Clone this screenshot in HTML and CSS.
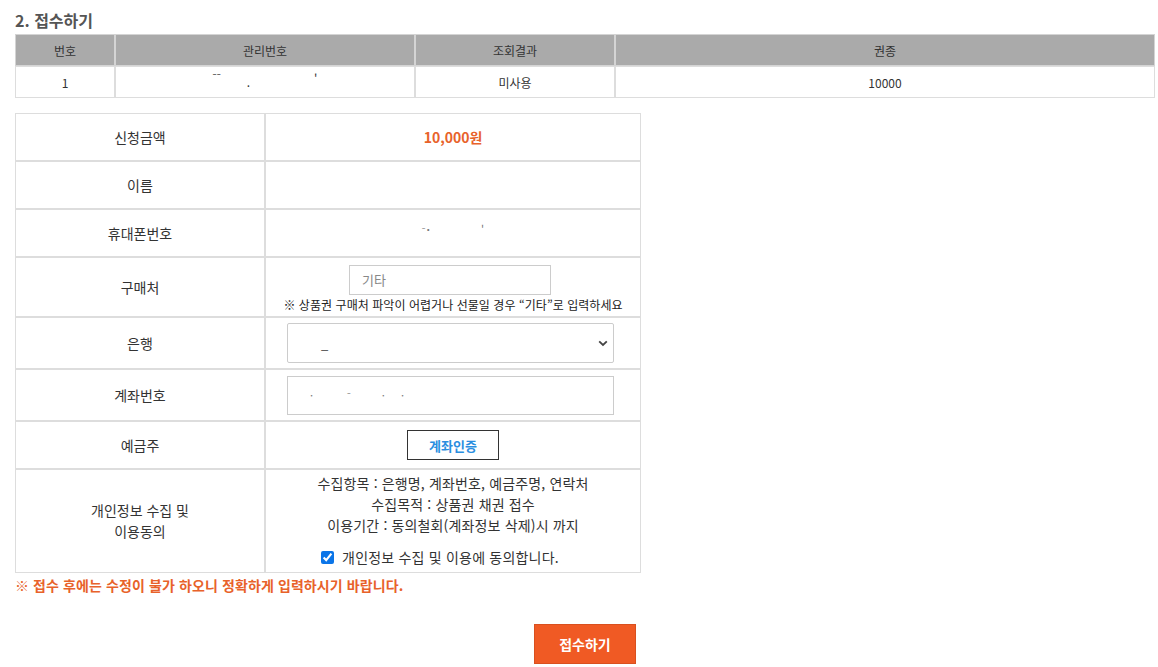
FILE: index.html
```html
<!DOCTYPE html>
<html lang="ko">
<head>
<meta charset="utf-8">
<title>접수하기</title>
<link rel="stylesheet" href="styles.css">
</head>
<body>
<div class="wrap">
  <h2 class="title">2. 접수하기</h2>
  <table class="list">
    <colgroup>
      <col class="c1"><col class="c2"><col class="c3"><col class="c4">
    </colgroup>
    <thead>
      <tr><th>번호</th><th>관리번호</th><th>조회결과</th><th>권종</th></tr>
    </thead>
    <tbody>
      <tr><td>1</td><td class="masked"><span class="m1">⁻⁻</span><span class="m2">.</span><span class="m3">'</span></td><td>미사용</td><td>10000</td></tr>
    </tbody>
  </table>

  <table class="form">
    <colgroup><col class="lab"><col class="val"></colgroup>
    <tbody>
      <tr class="h48"><td class="label">신청금액</td><td class="price">10,000원</td></tr>
      <tr class="h48"><td class="label">이름</td><td></td></tr>
      <tr class="h48"><td class="label">휴대폰번호</td><td class="masked"><span class="p1">⁻˙</span><span class="p2">'</span></td></tr>
      <tr class="h60"><td class="label">구매처</td><td>
        <div class="shop"><input class="shop-input" type="text" placeholder="기타"></div>
        <p class="note">※ 상품권 구매처 파악이 어렵거나 선물일 경우 “기타”로 입력하세요</p>
      </td></tr>
      <tr class="h52"><td class="label">은행</td><td>
        <div class="select"><span class="sel-val">_</span>
          <svg class="chev" width="10" height="7" viewBox="0 0 10 7"><path d="M1.2 1.3 L5 5 L8.8 1.3" fill="none" stroke="#444" stroke-width="1.8"/></svg>
        </div>
      </td></tr>
      <tr class="h52"><td class="label">계좌번호</td><td>
        <div class="acct"><span class="a1">·</span><span class="a2">⁻</span><span class="a3">·</span><span class="a4">·</span></div>
      </td></tr>
      <tr class="h48"><td class="label">예금주</td><td><button class="verify" type="button">계좌인증</button></td></tr>
      <tr class="h104"><td class="label">개인정보 수집 및<br>이용동의</td><td class="privacy">
        <p>수집항목 : 은행명, 계좌번호, 예금주명, 연락처</p>
        <p>수집목적 : 상품권 채권 접수</p>
        <p>이용기간 : 동의철회(계좌정보 삭제)시 까지</p>
        <label class="agree"><input type="checkbox" checked> 개인정보 수집 및 이용에 동의합니다.</label>
      </td></tr>
    </tbody>
  </table>
  <p class="warn">※ 접수 후에는 수정이 불가 하오니 정확하게 입력하시기 바랍니다.</p>
  <div class="submit-row"><button class="submit" type="button">접수하기</button></div>
</div>
</body>
</html>
```
FILE: styles.css
```css
* { box-sizing: border-box; }
html, body { margin: 0; padding: 0; background: #fff; }
body {
  font-family: "Noto Sans CJK KR", "Noto Sans", sans-serif;
  color: #333;
  font-size: 14px;
}
.wrap { padding: 8px 3px 0 15px; width: 1158px; }
.title {
  margin: 0;
  height: 26px;
  font-size: 16px;
  line-height: 24px;
  font-weight: 700;
  color: #555;
}
table { border-collapse: separate; border-spacing: 0; table-layout: fixed; }
.list { width: 1140px; }
.list .c1 { width: 100px; }
.list .c2 { width: 300px; }
.list .c3 { width: 200px; }
.list .c4 { width: 540px; }
.list th, .list td {
  border: 1px solid #ddd;
  height: 32px;
  padding: 0;
  text-align: center;
  vertical-align: middle;
  font-size: 12px;
  font-weight: 400;
  color: #333;
}
.list th { background: #aaa; border-color: #d4d4d4; color: #333; }
.masked { color: #777; font-size: 11px; }
.m1 { margin-right: 26px; position: relative; top: -5px; }
.m2 { margin-right: 64px; }
.m3 { position: relative; top: -4px; }

.form { width: 626px; margin-top: 15px; }
.form .lab { width: 250px; }
.form .val { width: 376px; }
.form td {
  border: 1px solid #ddd;
  padding: 0;
  text-align: center;
  vertical-align: middle;
}
.h48 td { height: 48px; }
.h60 td { height: 60px; }
.h52 td { height: 52px; }
.h104 td { height: 104px; }
.label { font-size: 14px; color: #333; line-height: 21px; }
.price { color: #e8622a; font-weight: 700; font-size: 14px; }
.p1 { margin-right: 50px; position: relative; top: -3px; }
.p2 { position: relative; top: -5px; }

.shop { display: flex; justify-content: center; padding-right: 6px; }
.shop-input {
  width: 202px; height: 30px;
  border: 1px solid #ccc;
  padding: 0 12px;
  font: inherit; font-size: 13px;
  margin: 5px 0 0 0;
}
.shop-input::placeholder { color: #888; }
.note { margin: 0; font-size: 12px; line-height: 20px; color: #222; letter-spacing: 0.05px; }

.select {
  position: relative;
  margin: 0 0 0 21px;
  width: 327px; height: 40px;
  border: 1px solid #ccc;
  border-radius: 2px;
  display: flex; align-items: center;
  padding-left: 33px;
  font-size: 13px; color: #444;
}
.chev { position: absolute; right: 5px; top: 16px; }
.acct {
  margin: 0 0 0 21px;
  width: 327px; height: 39px;
  border: 1px solid #ccc;
  display: flex; align-items: center;
  font-size: 11px; color: #777;
  padding-left: 22px;
}
.a1 { margin-right: 34px; }
.a2 { margin-right: 31px; }
.a3 { margin-right: 16px; }

.verify {
  width: 92px; height: 30px;
  background: #fff;
  border: 1px solid #333;
  color: #2a8ee0;
  font: inherit; font-weight: 700; font-size: 13px;
  margin-left: 0;
  padding: 0;
  cursor: pointer;
}
.privacy { padding-bottom: 1px !important; }
.privacy p { margin: 0; font-size: 14px; line-height: 21px; color: #333; letter-spacing: 0.15px; }
.agree {
  display: inline-flex; align-items: center;
  margin-top: 11px;
  font-size: 14px; color: #333; letter-spacing: 0.2px;
  margin-left: -26px;
}
.agree input { width: 13px; height: 13px; margin: 0 8px 0 0; accent-color: #0b75e8; }

.warn {
  margin: 2px 0 0 0;
  font-size: 14px; line-height: 20px;
  font-weight: 700;
  color: #e8622a;
  letter-spacing: 0.1px;
}
.submit-row { display: flex; justify-content: center; width: 1140px; margin-top: 29px; }
.submit {
  width: 102px; height: 40px;
  background: #f05a24;
  border: 1px solid #d9501f;
  color: #fff;
  font: inherit; font-weight: 700; font-size: 14px;
  padding: 0;
}
```
